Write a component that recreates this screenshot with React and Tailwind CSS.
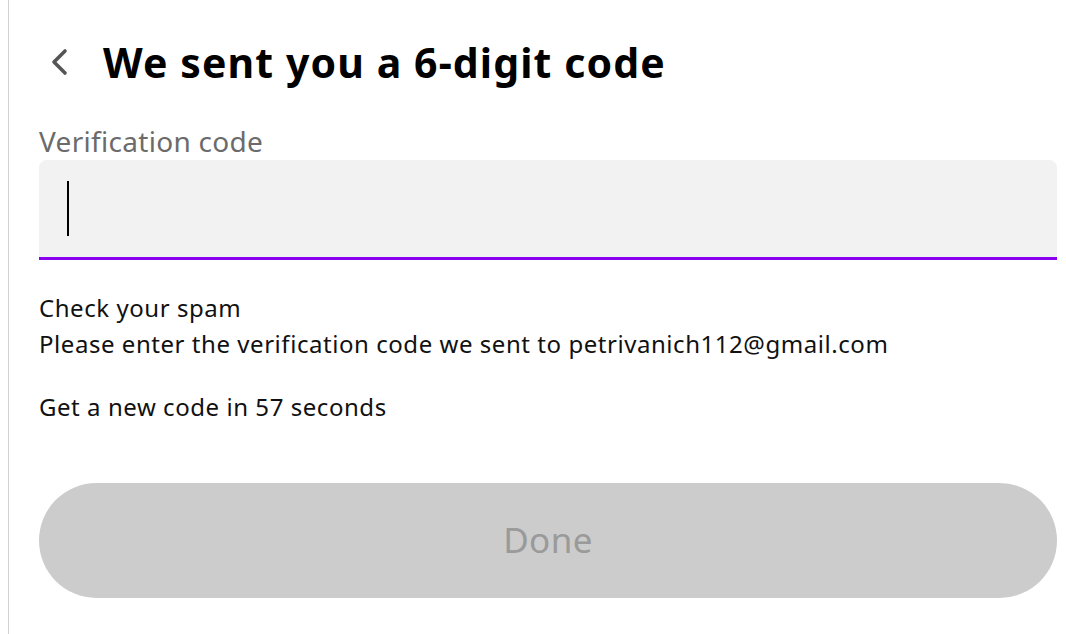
export default function App() {
  return (
    <div className="w-[1066px] h-[634px] bg-white flex overflow-hidden" style={{ fontFamily: '"Noto Sans", "Open Sans", sans-serif' }}>
      <div className="w-[8px] shrink-0" />
      <div className="w-px h-full bg-[#d2d2d2] shrink-0" />
      <div className="flex-1 flex flex-col pl-[30px] pr-[9px]">
        <div className="flex items-center h-[60px] mt-[32px]">
          <svg width="22" height="32" viewBox="0 0 22 32" className="ml-[9px]" fill="none">
            <path d="M17 5 L6 16 L17 27" stroke="#555555" strokeWidth="3.6" strokeLinecap="round" strokeLinejoin="round" />
          </svg>
          <h1 className="ml-[33px] text-[41px] font-bold text-black leading-none tracking-[1.1px]">We sent you a 6-digit code</h1>
        </div>
        <label className="mt-[30px] text-[28px] text-[#6b6b6b] leading-[38px] tracking-[0.3px]">Verification code</label>
        <div className="h-[100px] bg-[#f2f2f2] rounded-t-[8px] border-b-[3px] border-[#8b00f0] flex items-center pl-[28px]">
          <div className="w-[2px] h-[55px] bg-black" />
        </div>
        <div className="mt-[30px] text-[24px] text-[#111] leading-[36px] tracking-[0.55px]">
          <div>Check your spam</div>
          <div>Please enter the verification code we sent to petrivanich112@gmail.com</div>
          <div className="mt-[27px]">Get a new code in 57 seconds</div>
        </div>
        <button className="mt-[58px] h-[115px] rounded-full bg-[#cccccc] text-[#9a9a9a] text-[35px] tracking-[0.4px] flex items-center justify-center">Done</button>
      </div>
    </div>
  );
}
